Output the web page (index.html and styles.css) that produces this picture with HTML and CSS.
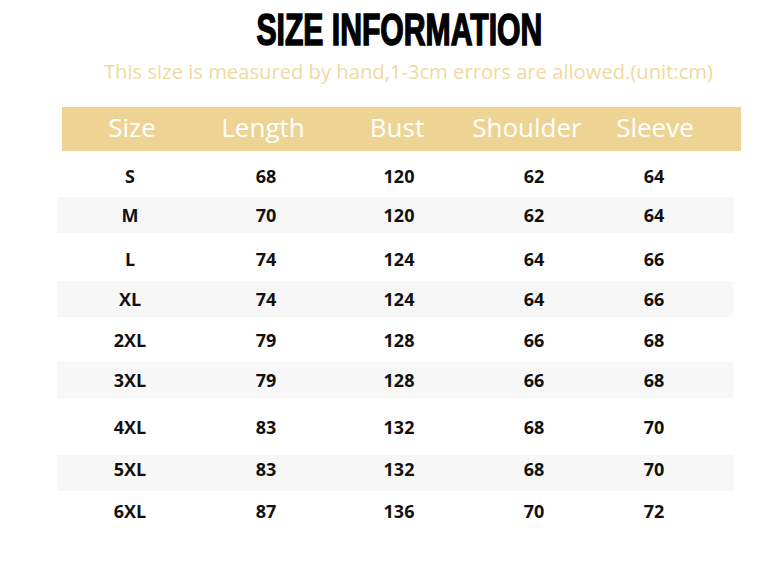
FILE: index.html
```html
<!DOCTYPE html>
<html>
<head>
<meta charset="utf-8">
<link rel="stylesheet" href="styles.css">
</head>
<body>
<div class="page">
  <h1 class="title"><span class="title-text">SIZE INFORMATION</span></h1>
  <p class="note">This size is measured by hand,1-3cm errors are allowed.(unit:cm)</p>
  <div class="head">
    <span>Size</span><span>Length</span><span>Bust</span><span>Shoulder</span><span>Sleeve</span>
  </div>
  <div class="rows">
    <div class="row"><span>S</span><span>68</span><span>120</span><span>62</span><span>64</span></div>
    <div class="row alt"><span>M</span><span>70</span><span>120</span><span>62</span><span>64</span></div>
    <div class="row"><span>L</span><span>74</span><span>124</span><span>64</span><span>66</span></div>
    <div class="row alt"><span>XL</span><span>74</span><span>124</span><span>64</span><span>66</span></div>
    <div class="row"><span>2XL</span><span>79</span><span>128</span><span>66</span><span>68</span></div>
    <div class="row alt"><span>3XL</span><span>79</span><span>128</span><span>66</span><span>68</span></div>
    <div class="row"><span>4XL</span><span>83</span><span>132</span><span>68</span><span>70</span></div>
    <div class="row alt"><span>5XL</span><span>83</span><span>132</span><span>68</span><span>70</span></div>
    <div class="row"><span>6XL</span><span>87</span><span>136</span><span>70</span><span>72</span></div>
  </div>
</div>
</body>
</html>
```
FILE: styles.css
```css
html, body {
  margin: 0;
  padding: 0;
  background: #ffffff;
}
.page {
  width: 781px;
  height: 567px;
  position: relative;
  overflow: hidden;
  font-family: "Open Sans", "Noto Sans", sans-serif;
}
.title {
  margin: 0;
  padding-top: 7px;
  height: 49px;
  text-align: center;
  line-height: 46px;
  font-family: "Liberation Sans", "Arial", sans-serif;
  font-weight: 700;
  font-size: 45px;
  color: #000;
}
.title-text {
  display: inline-block;
  transform: scaleX(0.67);
  margin-left: 18px;
  -webkit-text-stroke: 1.6px #000;
}
.note {
  margin: 0;
  padding-left: 104px;
  height: 30px;
  line-height: 30px;
  font-size: 20.2px;
  color: #f0d9a0;
  white-space: nowrap;
}
.head {
  margin: 21px 0 0 62px;
  width: 679px;
  height: 44px;
  background: #eed494;
  display: grid;
  grid-template-columns: 140px 122px 146px 114px 142px 1fr;
  align-items: center;
  color: #fff;
  font-size: 26px;
  line-height: 40px;
  padding-bottom: 4px;
  box-sizing: border-box;
}
.head span {
  text-align: center;
}
.rows {
  margin: 9px 0 0 57px;
  width: 676px;
  display: grid;
  grid-template-rows: 37px 36px 48px 36px 45px 36px 57px 36px 44px;
}
.row {
  display: grid;
  grid-template-columns: 146px 126px 140px 130px 110px 1fr;
  align-items: center;
  font-weight: 700;
  font-size: 18px;
  color: #111;
}
.row span {
  text-align: center;
}
.row:nth-child(1) { padding-bottom: 6px; }
.row:nth-child(3) { padding-top: 4px; }
.row:nth-child(8) { padding-bottom: 8px; }
.row:nth-child(9) { padding-bottom: 4px; }
.alt {
  background: #f7f7f7;
}
```
